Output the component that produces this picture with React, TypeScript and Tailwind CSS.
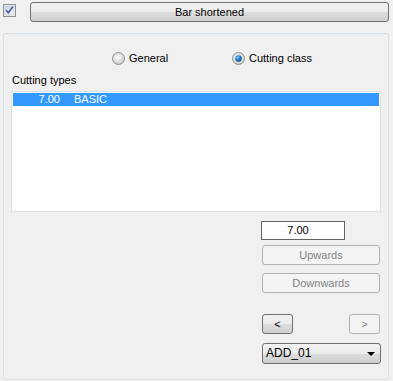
import React from 'react';

const font = { fontFamily: '"Liberation Sans", Arial, sans-serif' };

function CheckBox() {
  return (
    <svg width="13" height="13" viewBox="0 0 13 13" className="block">
      <defs>
        <linearGradient id="cbFill" x1="0" y1="0" x2="1" y2="1">
          <stop offset="0" stopColor="#c9d3e3" />
          <stop offset="1" stopColor="#f4f6fa" />
        </linearGradient>
      </defs>
      <rect x="0.5" y="0.5" width="12" height="12" fill="#f6f6f6" stroke="#8e8f8f" />
      <rect x="2" y="2" width="9" height="9" fill="url(#cbFill)" stroke="#b4bccb" strokeWidth="0.6" />
      <path d="M3.2 6.3 L5.4 8.8 L9.8 2.8" fill="none" stroke="#4a5a96" strokeWidth="1.6" />
    </svg>
  );
}

function Radio({ checked }: { checked?: boolean }) {
  const id = checked ? 'rdOn' : 'rdOff';
  return (
    <svg width="13" height="13" viewBox="0 0 13 13" className="block">
      <defs>
        <radialGradient id={id} cx="0.4" cy="0.35" r="0.7">
          <stop offset="0" stopColor="#ffffff" />
          <stop offset="1" stopColor="#c7c7c7" />
        </radialGradient>
        <radialGradient id="rdDot" cx="0.4" cy="0.35" r="0.7">
          <stop offset="0" stopColor="#8fd0f5" />
          <stop offset="0.5" stopColor="#1e7dc4" />
          <stop offset="1" stopColor="#0d3d6e" />
        </radialGradient>
      </defs>
      <circle cx="6.5" cy="6.5" r="6" fill={`url(#${id})`} stroke="#8e8f8f" />
      <circle cx="6.5" cy="6.5" r="4.3" fill="none" stroke="#d8d8d8" strokeWidth="0.8" />
      {checked && <circle cx="6.5" cy="6.5" r="3.2" fill="url(#rdDot)" />}
    </svg>
  );
}

const btn =
  'flex items-center justify-center rounded-[3px] border border-[#707070] bg-[linear-gradient(#f2f2f2_0%,#ebebeb_50%,#dddddd_51%,#cfcfcf_100%)] text-black';
const btnOff =
  'flex items-center justify-center rounded-[3px] border border-[#adb2b5] bg-[#f4f4f4] text-[#838383]';

export default function App() {
  return (
    <div className="w-[393px] h-[381px] bg-[#f0f0f0] text-[11px] leading-[13px] text-black overflow-hidden" style={font}>
      {/* top row */}
      <div className="flex items-start pt-[2px]">
        <div className="ml-[3px] mt-[2px]">
          <CheckBox />
        </div>
        <button className={`${btn} ml-[14px] w-[359px] h-[20px]`}>Bar shortened</button>
      </div>

      {/* panel */}
      <div className="mt-[11px] ml-[3px] w-[386px] h-[347px] border border-[#d5dfe5] rounded-[3px] flex flex-col">
        {/* radios */}
        <div className="flex mt-[18px] ml-[108px] h-[13px] items-center">
          <div className="flex items-center gap-[4px] w-[120px]">
            <Radio />
            <span>General</span>
          </div>
          <div className="flex items-center gap-[4px]">
            <Radio checked />
            <span>Cutting class</span>
          </div>
        </div>

        <div className="mt-[9px] ml-[8px]">Cutting types</div>

        {/* list box */}
        <div className="mt-[4px] ml-[7px] w-[370px] h-[121px] border border-[#dcdfe3] bg-white p-[1px]">
          <div className="flex h-[13px] items-center bg-[#3399ff] text-white">
            <span className="w-[47px] text-right">7.00</span>
            <span className="ml-[14px]">BASIC</span>
          </div>
        </div>

        {/* right column */}
        <div className="flex flex-col ml-[257px]">
          <div className="mt-[9px] w-[84px] h-[19px] border border-[#646464] bg-white flex items-center justify-center pr-[10px]">
            7.00
          </div>
          <button className={`${btnOff} mt-[5px] ml-[1px] w-[118px] h-[20px]`}>Upwards</button>
          <button className={`${btnOff} mt-[8px] ml-[1px] w-[118px] h-[20px]`}>Downwards</button>
          <div className="mt-[21px] ml-[1px] flex w-[118px] justify-between">
            <button className={`${btn} w-[31px] h-[20px]`}>&lt;</button>
            <button className={`${btnOff} w-[31px] h-[20px]`}>&gt;</button>
          </div>
          <div className={`${btn} mt-[9px] ml-[1px] w-[119px] h-[21px] !justify-between px-[3px]`}>
            <span className="text-[12px]">ADD_01</span>
            <svg width="8" height="4" viewBox="0 0 8 4" className="mr-[2px]">
              <path d="M0 0 H8 L4 4 Z" fill="#000" />
            </svg>
          </div>
        </div>
      </div>
    </div>
  );
}
